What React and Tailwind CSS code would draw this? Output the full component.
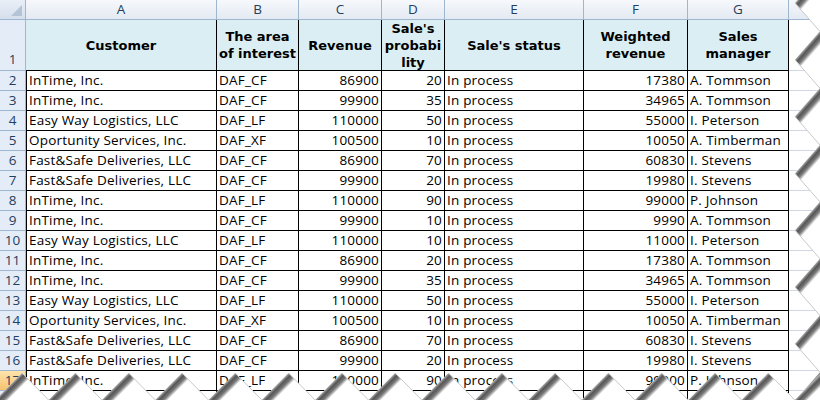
import React from "react";

const rows = [
  ["InTime, Inc.", "DAF_CF", 86900, 20, "In process", 17380, "A. Tommson"],
  ["InTime, Inc.", "DAF_CF", 99900, 35, "In process", 34965, "A. Tommson"],
  ["Easy Way Logistics, LLC", "DAF_LF", 110000, 50, "In process", 55000, "I. Peterson"],
  ["Oportunity Services, Inc.", "DAF_XF", 100500, 10, "In process", 10050, "A. Timberman"],
  ["Fast&Safe Deliveries, LLC", "DAF_CF", 86900, 70, "In process", 60830, "I. Stevens"],
  ["Fast&Safe Deliveries, LLC", "DAF_CF", 99900, 20, "In process", 19980, "I. Stevens"],
  ["InTime, Inc.", "DAF_LF", 110000, 90, "In process", 99000, "P. Johnson"],
  ["InTime, Inc.", "DAF_CF", 99900, 10, "In process", 9990, "A. Tommson"],
  ["Easy Way Logistics, LLC", "DAF_LF", 110000, 10, "In process", 11000, "I. Peterson"],
  ["InTime, Inc.", "DAF_CF", 86900, 20, "In process", 17380, "A. Tommson"],
  ["InTime, Inc.", "DAF_CF", 99900, 35, "In process", 34965, "A. Tommson"],
  ["Easy Way Logistics, LLC", "DAF_LF", 110000, 50, "In process", 55000, "I. Peterson"],
  ["Oportunity Services, Inc.", "DAF_XF", 100500, 10, "In process", 10050, "A. Timberman"],
  ["Fast&Safe Deliveries, LLC", "DAF_CF", 86900, 70, "In process", 60830, "I. Stevens"],
  ["Fast&Safe Deliveries, LLC", "DAF_CF", 99900, 20, "In process", 19980, "I. Stevens"],
  ["InTime, Inc.", "DAF_LF", 110000, 90, "In process", 99000, "P. Johnson"],
];

const titles = [
  ["Customer"],
  ["The area", "of interest"],
  ["Revenue"],
  ["Sale's", "probabi", "lity"],
  ["Sale's status"],
  ["Weighted", "revenue"],
  ["Sales", "manager"],
];

const numeric = [false, false, true, true, false, true, false];

const grid =
  "grid grid-cols-[26px_191px_82px_83px_63px_139px_104px_101px_1fr]";

function RowHead({ n, active }) {
  return (
    <div
      className={`h-5 border-r border-b border-[#9eb6ce] flex items-end justify-center pb-[1px] text-[13.5px] leading-[17px] text-[#243e5e] ${
        active
          ? "bg-gradient-to-b from-[#fde3ac] to-[#f6c26c]"
          : "bg-[#e4ecf7]"
      }`}
    >
      {n}
    </div>
  );
}

function Cell({ children, right, first }) {
  return (
    <div
      className={`h-5 border-r border-b border-black flex items-end overflow-hidden whitespace-nowrap px-[2px] pb-[1px] text-[13.5px] leading-[17px] tracking-[0.2px] text-black ${
        right ? "justify-end" : ""
      } ${first ? "border-l" : ""}`}
    >
      {children}
    </div>
  );
}

function TornEdge() {
  const right = [3, 59.8, 116.6, 173.4, 230.2, 287, 343.8, 400.6];
  const bottom = Array.from({ length: 16 }, (_, i) => 22 + i * 53.3);

  return (
    <svg
      className="absolute inset-0 pointer-events-none"
      width="820"
      height="400"
      viewBox="0 0 820 400"
    >
      <defs>
        <linearGradient
          id="shB"
          gradientUnits="userSpaceOnUse"
          x1="-13.3"
          y1="13.5"
          x2="-6.9"
          y2="19.9"
        >
          <stop offset="0" stopColor="#a8a8a8" />
          <stop offset="0.3" stopColor="#555" />
          <stop offset="0.65" stopColor="#7a7a7a" />
          <stop offset="1" stopColor="#f4f4f4" />
        </linearGradient>
        <linearGradient
          id="shR"
          gradientUnits="userSpaceOnUse"
          x1="12.5"
          y1="-14.25"
          x2="19.25"
          y2="-8.3"
        >
          <stop offset="0" stopColor="#a8a8a8" />
          <stop offset="0.3" stopColor="#555" />
          <stop offset="0.65" stopColor="#7a7a7a" />
          <stop offset="1" stopColor="#f4f4f4" />
        </linearGradient>
      </defs>
      {right.map((p) => (
        <g key={p} transform={`translate(795 ${p})`}>
          <polygon points="25,-28.5 0,0 25,28.5" fill="#fff" />
          <polygon points="25,-28.5 0,0 6,6.8 25,-14.8" fill="url(#shR)" />
          <line x1="0" y1="0" x2="25" y2="28.5" stroke="#c8c8c8" />
        </g>
      ))}
      {bottom.map((x) => (
        <g key={x} transform={`translate(${x} 373)`}>
          <polygon points="-26.65,27 0,0 26.65,27" fill="#fff" />
          <polygon points="-26.65,27 0,0 6.4,6.4 -14.2,27" fill="url(#shB)" />
          <line x1="0" y1="0" x2="26.65" y2="27" stroke="#c8c8c8" />
        </g>
      ))}
    </svg>
  );
}

export default function App() {
  return (
    <div className="w-[820px] h-[400px] overflow-hidden relative bg-white font-['Open_Sans',sans-serif]">
      {/* column letters */}
      <div className={grid}>
        <div className="h-5 border-r border-b border-[#9eb6ce] bg-gradient-to-b from-[#e9eff7] to-[#d5dfec] relative">
          <svg className="absolute right-[3px] bottom-[3px]" width="11" height="11">
            <polygon points="11,0 11,11 0,11" fill="#b4c3d6" />
          </svg>
        </div>
        {["A", "B", "C", "D", "E", "F", "G", ""].map((c, i) => (
          <div
            key={i}
            className="h-5 border-r border-b border-[#9eb6ce] bg-gradient-to-b from-[#f6f8fb] to-[#e4eaf3] flex items-center justify-center text-[13.5px] leading-[17px] text-[#243e5e]"
          >
            {c}
          </div>
        ))}
      </div>

      {/* title row */}
      <div className={grid}>
        <div className="h-[51px] border-r border-b border-[#9eb6ce] bg-[#e4ecf7] flex items-end justify-center pb-[2px] text-[13.5px] leading-[17px] text-[#243e5e]">
          1
        </div>
        {titles.map((t, i) => (
          <div
            key={i}
            className="h-[51px] border-r border-b border-black bg-[#daeef3] flex flex-col items-center justify-center text-center font-['DejaVu_Sans',sans-serif] font-bold text-[13px] leading-[17px] text-black"
          >
            {t.map((line) => (
              <span key={line}>{line}</span>
            ))}
          </div>
        ))}
        <div className="h-[51px] border-b border-[#d0d7e5]" />
      </div>

      {/* data rows */}
      {rows.map((r, i) => (
        <div key={i} className={grid}>
          <RowHead n={i + 2} active={i + 2 === 17} />
          {r.map((v, j) => (
            <Cell key={j} right={numeric[j]} first={j === 0}>
              {v}
            </Cell>
          ))}
          <div className="h-5 border-b border-[#d0d7e5]" />
        </div>
      ))}

      {/* row 18, cut by the torn edge */}
      <div className={grid}>
        <RowHead n="" />
        {numeric.map((num, j) => (
          <Cell key={j} right={num} first={j === 0} />
        ))}
        <div className="h-5 border-b border-[#d0d7e5]" />
      </div>

      <TornEdge />
    </div>
  );
}
